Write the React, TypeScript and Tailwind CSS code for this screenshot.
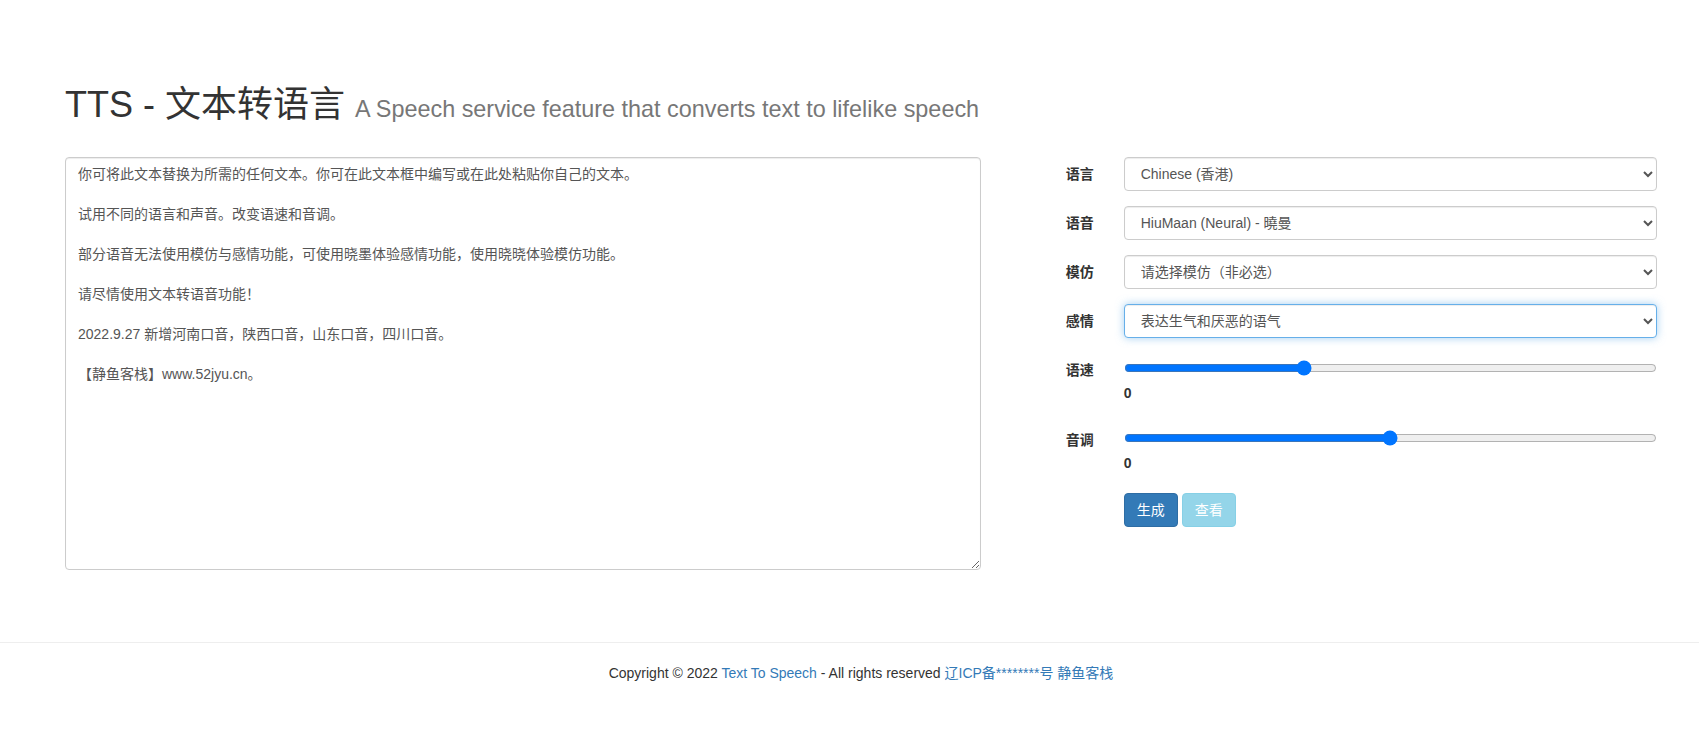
import React from "react";

const sampleText = `你可将此文本替换为所需的任何文本。你可在此文本框中编写或在此处粘贴你自己的文本。

试用不同的语言和声音。改变语速和音调。

部分语音无法使用模仿与感情功能，可使用晓墨体验感情功能，使用晓晓体验模仿功能。

请尽情使用文本转语音功能！

2022.9.27 新增河南口音，陕西口音，山东口音，四川口音。

【静鱼客栈】www.52jyu.cn。`;

const font = "font-['Liberation_Sans','Noto_Sans_CJK_SC',sans-serif]";

function SelectRow({ label, value, options, focused }: { label: string; value: string; options: string[]; focused?: boolean }) {
  return (
    <div className="flex mb-[15px]">
      <label className="w-[112.67px] shrink-0 px-[15px] pt-[7px] text-right font-bold leading-5 text-[#333]">{label}</label>
      <div className="flex-1 px-[15px]">
        <select
          defaultValue={value}
          className={
            "block h-[34px] w-full rounded-[4px] border bg-white px-[12px] py-[6px] text-[14px] leading-5 text-[#555] outline-none " +
            (focused
              ? "border-[#66afe9] shadow-[inset_0_1px_1px_rgba(0,0,0,.075),0_0_8px_rgba(102,175,233,.6)]"
              : "border-[#ccc] shadow-[inset_0_1px_1px_rgba(0,0,0,.075)]")
          }
        >
          {options.map((o) => (
            <option key={o} value={o}>{o}</option>
          ))}
        </select>
      </div>
    </div>
  );
}

function RangeRow({ label, min, max }: { label: string; min: number; max: number }) {
  return (
    <div className="flex mb-[15px]">
      <label className="w-[112.67px] shrink-0 px-[15px] pt-[7px] text-right font-bold leading-5 text-[#333]">{label}</label>
      <div className="flex-1 px-[15px]">
        <div className="flex h-[30px] items-center">
          <input type="range" min={min} max={max} defaultValue={0} className="m-0 w-full" />
        </div>
        <div className="mb-[5px] font-bold leading-5 text-[#333]">0</div>
      </div>
    </div>
  );
}

export default function App() {
  return (
    <div className={`min-h-[731px] bg-white text-[14px] leading-5 text-[#333] ${font}`}>
      {/* Main */}
      <div className="ml-[50px] w-[1622px] pt-[85px]">
        <h1 className="mb-[32px] px-[15px] text-[36px] font-normal leading-[1.1] text-[#333]">
          TTS - 文本转语言 <small className="text-[65%] font-normal text-[#777]">A Speech service feature that converts text to lifelike speech</small>
        </h1>
        <div className="flex">
          {/* Left */}
          <div className="w-[946px] px-[15px]">
            <textarea
              defaultValue={sampleText}
              className="block h-[413px] w-full rounded-[4px] border border-[#ccc] bg-white px-[12px] py-[6px] text-[14px] leading-5 text-[#555] shadow-[inset_0_1px_1px_rgba(0,0,0,.075)] outline-none"
            />
          </div>
          {/* Right */}
          <div className="w-[676px]">
            <SelectRow label="语言" value="Chinese (香港)" options={["Chinese (香港)", "Chinese (Mandarin, Simplified)"]} />
            <SelectRow label="语音" value="HiuMaan (Neural) - 曉曼" options={["HiuMaan (Neural) - 曉曼", "HiuGaai (Neural) - 曉佳"]} />
            <SelectRow label="模仿" value="请选择模仿（非必选）" options={["请选择模仿（非必选）"]} />
            <SelectRow label="感情" value="表达生气和厌恶的语气" options={["表达生气和厌恶的语气"]} focused />
            <RangeRow label="语速" min={-100} max={200} />
            <RangeRow label="音调" min={-50} max={50} />
            <div className="flex gap-[4px] pl-[127.67px]">
              <button className="h-[34px] rounded-[4px] border border-[#2e6da4] bg-[#337ab7] px-[12px] text-[14px] leading-5 text-white">生成</button>
              <button disabled className="h-[34px] rounded-[4px] border border-[#46b8da] bg-[#5bc0de] px-[12px] text-[14px] leading-5 text-white opacity-65">查看</button>
            </div>
          </div>
        </div>
      </div>
      {/* Footer */}
      <div className="mt-[72px] border-t border-[#eee] py-[20px]">
        <p className="ml-[50px] w-[1622px] text-center">
          Copyright © 2022 <a className="text-[#337ab7]">Text To Speech</a> - All rights reserved <a className="text-[#337ab7]">辽ICP备********号 静鱼客栈</a>
        </p>
      </div>
    </div>
  );
}
